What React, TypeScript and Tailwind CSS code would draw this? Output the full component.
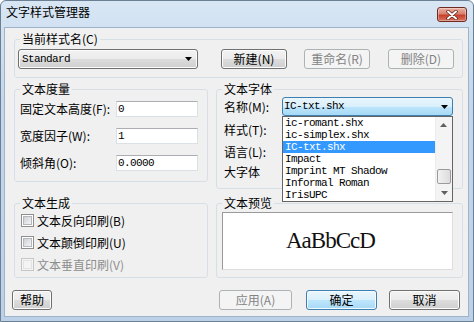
import React from "react";

const btnNormal =
  "flex items-center justify-center h-[20px] rounded-[3px] border border-[#707070] bg-[linear-gradient(#f2f2f2_0%,#ebebeb_50%,#dddddd_50%,#cfcfcf_100%)] shadow-[inset_0_0_0_1px_#fcfcfc] text-[12px] leading-[14px] text-black";
const btnDisabled =
  "flex items-center justify-center h-[20px] rounded-[3px] border border-[#adb2b5] bg-[#f4f4f4] text-[12px] leading-[14px] text-[#838383]";
const btnDefault =
  "flex items-center justify-center h-[20px] rounded-[3px] border border-[#3c7fb1] bg-[linear-gradient(#eaf6fd_0%,#d9f0fc_50%,#bee6fd_50%,#a7d9f5_100%)] shadow-[inset_0_0_0_1px_#f4fbff] text-[12px] leading-[14px] text-black";

const mono = "font-['Liberation_Mono',monospace] text-[11px] tracking-[-0.6px]";

function Arrow({ color = "#000" }: { color?: string }) {
  return (
    <svg width="7" height="4" viewBox="0 0 7 4">
      <polygon points="0,0 7,0 3.5,4" fill={color} />
    </svg>
  );
}

function Group({
  title,
  className,
  children,
}: {
  title: string;
  className: string;
  children?: React.ReactNode;
}) {
  return (
    <fieldset className={`border border-[#d5dfe5] rounded-[3px] min-w-0 ${className}`}>
      <legend className="ml-[5px] px-[2px] text-[12px] leading-[14px] text-black">{title}</legend>
      {children}
    </fieldset>
  );
}

function Field({ label, value, first }: { label: string; value: string; first?: boolean }) {
  return (
    <div className={`flex items-center h-[16px] ${first ? "mt-[5px]" : "mt-[11px]"}`}>
      <div className="w-[101px] pl-[5px] text-[12px] leading-[14px] whitespace-nowrap">{label}</div>
      <div
        className={`w-[82px] h-[16px] bg-white border border-[#dbdfe6] border-t-[#abadb3] pl-[1px] flex items-center ${mono}`}
      >
        {value}
      </div>
    </div>
  );
}

function Check({ label, disabled, first }: { label: string; disabled?: boolean; first?: boolean }) {
  return (
    <div className={`flex items-center h-[13px] ${first ? "mt-[4px]" : "mt-[9px]"}`}>
      <div
        className={`ml-[6px] w-[13px] h-[13px] border p-[1px] ${
          disabled ? "border-[#c7c7c7] bg-[#f4f4f4]" : "border-[#8f8f8f] bg-white"
        }`}
      >
        <div
          className={`w-full h-full border ${
            disabled
              ? "border-[#e3e3e3] bg-[#f4f4f4]"
              : "border-[#b4b8bd] bg-[linear-gradient(135deg,#cdd1d6,#f4f4f4)]"
          }`}
        />
      </div>
      <div
        className={`ml-[3px] text-[12px] leading-[14px] whitespace-nowrap ${
          disabled ? "text-[#8d8d8d]" : "text-black"
        }`}
      >
        {label}
      </div>
    </div>
  );
}

const fonts = ["ic-romant.shx", "ic-simplex.shx", "IC-txt.shx", "Impact", "Imprint MT Shadow", "Informal Roman", "IrisUPC"];

export default function App() {
  return (
    <div className="w-[474px] h-[322px] border border-[#6b7f95] rounded-t-[6px] bg-[linear-gradient(#d8e6f4,#c4d7ec_30%,#bcd1e8)] pl-[3px] pr-[4px] pb-[4px] flex flex-col font-['Noto_Sans_CJK_SC',sans-serif] text-black overflow-hidden">
      {/* title bar */}
      <div className="h-[26px] flex items-start justify-between shrink-0">
        <div className="ml-[2px] mt-[4px] text-[12px] leading-[14px] text-black">文字样式管理器</div>
        <div className="mt-[6px] mr-[2px] w-[30px] h-[15px] rounded-[3px] border border-[#6e2b25] bg-[linear-gradient(#eab0a2_0%,#d8826f_45%,#c7402c_55%,#d9735c_100%)] shadow-[inset_0_0_0_1px_rgba(255,255,255,0.35)] flex items-center justify-center">
          <svg width="12" height="10" viewBox="0 0 12 10">
            <path d="M2 1.5 L10 8.5 M10 1.5 L2 8.5" stroke="#5a1f18" strokeWidth="3.4" strokeLinecap="round" />
            <path d="M2 1.5 L10 8.5 M10 1.5 L2 8.5" stroke="#ffffff" strokeWidth="2" strokeLinecap="round" />
          </svg>
        </div>
      </div>

      {/* body */}
      <div className="flex-1 border border-[#9fb3ca] bg-[#f0f0f0] flex flex-col">
        {/* current style */}
        <Group title="当前样式名(C)" className="ml-[9px] mt-[4px] w-[449px] h-[46px]">
          <div className="flex pl-[3px] pt-[3px]">
            <div className={`${btnNormal} w-[180px] !justify-between pl-[3px] pr-[5px]`}>
              <span className={mono}>Standard</span>
              <Arrow />
            </div>
            <div className={`${btnNormal} ml-[23px] w-[66px]`}>新建(N)</div>
            <div className={`${btnDisabled} ml-[17px] w-[66px]`}>重命名(R)</div>
            <div className={`${btnDisabled} ml-[18px] w-[66px]`}>删除(D)</div>
          </div>
        </Group>

        <div className="flex ml-[9px] mt-[4px]">
          {/* left column */}
          <div className="w-[194px] flex flex-col">
            <Group title="文本度量" className="h-[100px]">
              <Field label="固定文本高度(F):" value="0" first />
              <Field label="宽度因子(W):" value="1" />
              <Field label="倾斜角(O):" value="0.0000" />
            </Group>
            <Group title="文本生成" className="mt-[14px] h-[82px]">
              <Check label="文本反向印刷(B)" first />
              <Check label="文本颠倒印刷(U)" />
              <Check label="文本垂直印刷(V)" disabled />
            </Group>
          </div>

          {/* right column */}
          <div className="ml-[8px] w-[247px] flex flex-col">
            <Group title="文本字体" className="h-[107px] relative z-10">
              <div className="flex items-center mt-[1px] h-[19px]">
                <div className="w-[65px] pl-[7px] text-[12px] leading-[14px] whitespace-nowrap">名称(M):</div>
                <div className="relative w-[171px] h-[19px]">
                  <div className="w-full h-full rounded-[3px] border border-[#3c7fb1] bg-[linear-gradient(#eaf6fd_0%,#d9f0fc_50%,#bee6fd_50%,#a7d9f5_100%)] flex items-center justify-between pl-[1px] pr-[4px]">
                    <span className={mono}>IC-txt.shx</span>
                    <Arrow />
                  </div>
                  {/* dropdown list */}
                  <div className="absolute top-full left-0 w-[171px] h-[86px] border border-[#646464] bg-white flex">
                    <div className="flex-1 flex flex-col">
                      {fonts.map((f) => (
                        <div
                          key={f}
                          className={`h-[12px] leading-[12px] pl-[2px] whitespace-nowrap ${mono} ${
                            f === "IC-txt.shx" ? "bg-[#3399ff] text-white" : "text-black"
                          }`}
                        >
                          {f}
                        </div>
                      ))}
                    </div>
                    <div className="w-[17px] flex flex-col bg-[#f4f4f4] border-l border-[#ececec]">
                      <div className="h-[17px] flex items-center justify-center rotate-180">
                        <Arrow color="#5f5f5f" />
                      </div>
                      <div className="flex-1">
                        <div className="mt-[35px] mx-[1px] h-[15px] rounded-[2px] border border-[#9b9b9b] bg-[linear-gradient(90deg,#f2f2f2,#dcdcdc)]" />
                      </div>
                      <div className="h-[17px] flex items-center justify-center">
                        <Arrow color="#5f5f5f" />
                      </div>
                    </div>
                  </div>
                </div>
              </div>
              <div className="mt-[7px] pl-[7px] text-[12px] leading-[14px]">样式(T):</div>
              <div className="mt-[8px] pl-[7px] text-[12px] leading-[14px]">语言(L):</div>
              <div className="mt-[6px] pl-[7px] text-[12px] leading-[14px]">大字体</div>
            </Group>
            <Group title="文本预览" className="mt-[7px] h-[82px]">
              <div className="ml-[5px] mt-[2px] w-[231px] h-[58px] bg-white border border-[#9a9a9a] border-r-[#dedede] border-b-[#dedede] flex items-center pl-[63px]">
                <span className="font-['Liberation_Serif',serif] text-[23px] leading-[24px] tracking-[-1px] text-[#111]">
                  AaBbCcD
                </span>
              </div>
            </Group>
          </div>
        </div>

        {/* bottom buttons */}
        <div className="flex mt-[12px] ml-[7px]">
          <div className={`${btnNormal} w-[40px]`}>帮助</div>
          <div className={`${btnDisabled} ml-[167px] w-[73px]`}>应用(A)</div>
          <div className={`${btnDefault} ml-[14px] w-[71px]`}>确定</div>
          <div className={`${btnNormal} ml-[12px] w-[71px]`}>取消</div>
        </div>
      </div>
    </div>
  );
}
